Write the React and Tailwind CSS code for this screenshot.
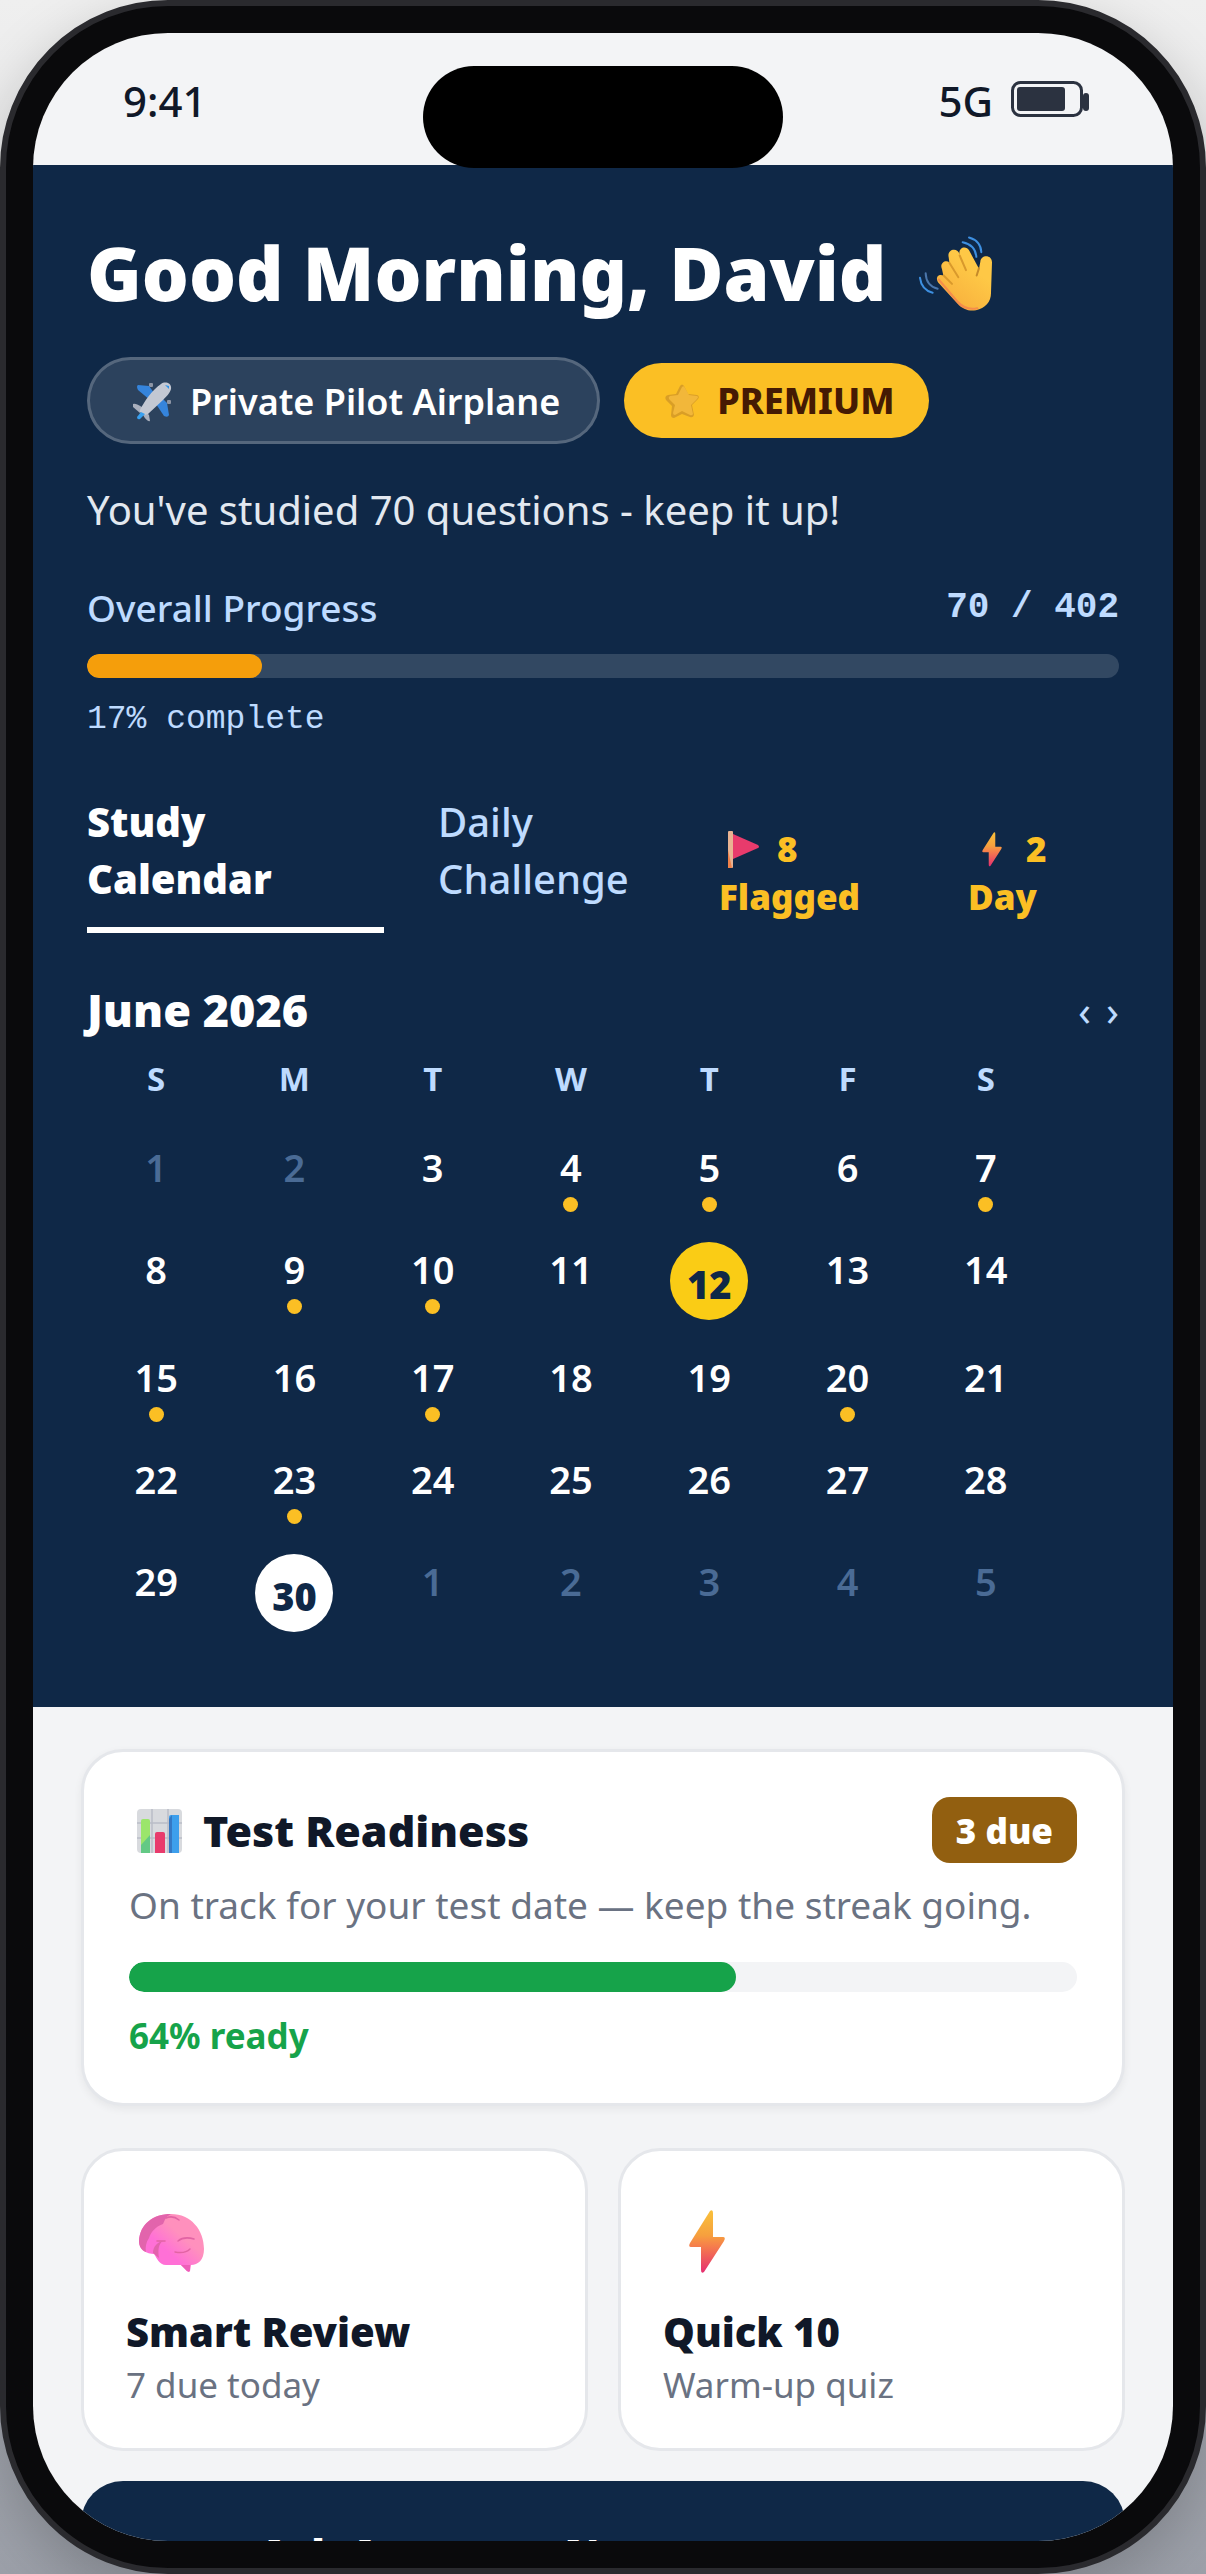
import { useState } from "react";
import clsx from "clsx";

const WEEKDAYS = ["S", "M", "T", "W", "T", "F", "S"];

const WEEKS = [
  [
    { day: 1, muted: true },
    { day: 2, muted: true },
    { day: 3 },
    { day: 4, studied: true },
    { day: 5, studied: true },
    { day: 6 },
    { day: 7, studied: true },
  ],
  [
    { day: 8 },
    { day: 9, studied: true },
    { day: 10, studied: true },
    { day: 11 },
    { day: 12, mark: "test" },
    { day: 13 },
    { day: 14 },
  ],
  [
    { day: 15, studied: true },
    { day: 16 },
    { day: 17, studied: true },
    { day: 18 },
    { day: 19 },
    { day: 20, studied: true },
    { day: 21 },
  ],
  [
    { day: 22 },
    { day: 23, studied: true },
    { day: 24 },
    { day: 25 },
    { day: 26 },
    { day: 27 },
    { day: 28 },
  ],
  [
    { day: 29 },
    { day: 30, mark: "today" },
    { day: 1, muted: true },
    { day: 2, muted: true },
    { day: 3, muted: true },
    { day: 4, muted: true },
    { day: 5, muted: true },
  ],
];

const WaveIcon = ({ className }) => (
  <svg viewBox="50 45 225 230" className={className} aria-hidden="true">
    <defs>
      <linearGradient id="wave-palm" x1="0.2" y1="0.9" x2="0.6" y2="0.3">
        <stop offset="0" stopColor="#f5824a" />
        <stop offset="0.22" stopColor="#f9b53f" />
        <stop offset="1" stopColor="#fec846" />
      </linearGradient>
    </defs>
    <g fill="none" stroke="#3d8fe0" strokeWidth="6" strokeLinecap="round">
      <path d="M184 66Q222 74 225 110" />
      <path d="M203 52Q238 62 240 96" />
      <path d="M73 159Q74 196 109 206" stroke="#4a76ab" />
      <path d="M56 173Q60 208 94 218" />
    </g>
    <path
      d="M109 168C104 176 108 184 114 191L168 250C184 268 204 274 224 270C252 264 270 244 269 216L272 127C272 102 238 103 237 125L233 146L204 92C194 73 169 83 175 104C170 80 136 87 142 111L144 126C130 118 114 131 122 147L126 166C120 163 113 164 109 168Z"
      fill="url(#wave-palm)"
    />
    <g fill="none" stroke="#d9992c" strokeWidth="6" strokeLinecap="round">
      <path d="M144 128L171 171" />
      <path d="M175 106L194 150" />
      <path d="M127 166L152 191" />
      <path d="M233 144L226 166" stroke="#c58a2a" />
    </g>
    <path
      d="M112 178L168 244C184 262 204 269 228 264"
      fill="none"
      stroke="#f4834c"
      strokeWidth="6"
      strokeLinecap="round"
      opacity="0.8"
    />
  </svg>
);

const PlaneIcon = ({ className }) => (
  <svg viewBox="0 0 40 40" className={className} aria-hidden="true">
    <g fill="#8d95a5">
      <rect x="17" y="1" width="4" height="4" rx="1" />
      <rect x="35" y="18" width="4" height="4" rx="1" />
    </g>
    <path d="M6 3L17 4L25 15L18 18L6 8Q4 4 6 3Z" fill="#3584dc" />
    <path d="M35 21L37 33Q36 36 32 34L24 22L28 14Z" fill="#3584dc" />
    <path d="M1 22Q4 21 11 26L8 31L1 25Z" fill="#a9afbd" />
    <path d="M12 28L17 33L18 39Q15 40 11 33Z" fill="#a9afbd" />
    <path
      d="M29 2C33 -1 40 1 39 7C38 11 34 15 31 18L16 32C12 34 7 31 8 28C12 20 20 8 29 2Z"
      fill="#c3c8d3"
    />
    <path d="M9 30L13 32L8 37Q5 38 5 35Z" fill="#38a0f0" />
    <path d="M33 3L37 4L37 7Z" fill="#2f92e8" />
  </svg>
);

const StarIcon = ({ className }) => (
  <svg viewBox="0 0 34 34" className={className} aria-hidden="true">
    <path
      d="M15 2Q17 -1 19 2L23 10L32 11Q35 12 33 15L27 21L29 31Q28 34 25 33L17 30L9 34Q6 34 6 31L7 22L1 16Q-1 12 3 11L11 10Z"
      fill="#d99e26"
    />
    <path
      d="M17 3Q19 1 20 4L24 11L32 12Q34 13 32 15L26 21L28 30Q27 32 25 31L17 27L10 31Q8 31 8 29L10 21L4 15Q3 13 5 12L13 11Z"
      fill="#f2b73a"
    />
  </svg>
);

const FlagIcon = ({ className }) => (
  <svg viewBox="0 0 48 48" className={className} aria-hidden="true">
    <path d="M14 9L39 20Q41 22 39 23L14 34Z" fill="#e83b6c" />
    <rect x="9" y="6" width="5" height="37" rx="1" fill="#e9b392" />
    <path d="M9 25L13 43H9Z" fill="#f0824a" />
  </svg>
);

const BoltIcon = ({ className }) => (
  <svg viewBox="-26 -13 88 88" className={className} aria-hidden="true">
    <defs>
      <linearGradient id="bolt" x1="0" y1="0" x2="0" y2="1">
        <stop offset="0.05" stopColor="#f9bd3a" />
        <stop offset="0.4" stopColor="#f6a03e" />
        <stop offset="0.55" stopColor="#f6824a" />
        <stop offset="1" stopColor="#e52e70" />
      </linearGradient>
    </defs>
    <path
      d="M21 1Q24 -1 24 3V27H34Q37 27 35 31L15 62Q12 64 12 60V37H2Q-1 37 1 33Z"
      fill="url(#bolt)"
    />
  </svg>
);

const ChartIcon = ({ className }) => (
  <svg viewBox="0 0 60 60" className={className} aria-hidden="true">
    <rect x="8" y="8" width="45" height="44" rx="4" fill="#d8dade" />
    <g stroke="#b9bdc7" strokeWidth="1.5">
      <path d="M8 22H53M8 37H53M23 8V52M39 8V52" />
    </g>
    <path d="M12 20Q12 18 14 18H19Q21 18 21 20V52H12Z" fill="#9be56b" />
    <path d="M12 44L21 34V52H12Z" fill="#63c985" />
    <path d="M26 33Q26 31 28 31H34Q36 31 36 33V52H26Z" fill="#e83b6c" />
    <path d="M40 16Q40 14 42 14H50V52H40Z" fill="#3d9fec" />
    <path d="M40 18L43 14V52H40Z" fill="#3578c4" />
  </svg>
);

const BrainIcon = ({ className }) => (
  <svg viewBox="-13 -17 88 88" className={className} aria-hidden="true">
    <defs>
      <linearGradient id="brain" x1="0.25" y1="0.85" x2="0.8" y2="0.3">
        <stop offset="0.35" stopColor="#ff70d6" />
        <stop offset="0.8" stopColor="#ff90bd" />
      </linearGradient>
    </defs>
    <path
      d="M0 27C1 10 14 0 32 0C52 0 65 16 65 35C65 46 59 51 52 51L51 57Q49 59 46 55L42 51H27C20 51 18 44 15 40C8 40 0 36 0 27Z"
      fill="url(#brain)"
    />
    <path
      d="M0 27C1 10 14 0 32 0C26 3 26 6 24 10C16 13 12 18 10 24C7 28 6 34 7 38C2 36 0 32 0 27Z"
      fill="#e264ac"
    />
    <path d="M24 27C19 30 19 37 20 44C17 42 16 40 14 39C14 33 18 28 24 27Z" fill="#e264ac" />
    <g fill="none" stroke="#e264a4" strokeWidth="1.5" strokeLinecap="round">
      <path d="M27 4Q34 1 40 6" />
      <path d="M39 27Q45 22 55 25" />
      <path d="M36 38Q46 40 51 35" />
      <path d="M18 27H26" />
    </g>
    <path d="M42 51H51V57Q49 59 46 55Z" fill="#ee5fb8" />
  </svg>
);

const BatteryIcon = ({ className }) => (
  <svg viewBox="0 0 78 36" className={className} aria-hidden="true">
    <rect x="1.5" y="1.5" width="69" height="33" rx="8" fill="none" stroke="#2b3240" strokeWidth="3" />
    <rect x="6" y="6" width="48" height="24" rx="3" fill="#2b3240" />
    <rect x="72" y="12" width="6" height="18" rx="3" fill="#2b3240" />
  </svg>
);

function StatusBar() {
  return (
    <div className="relative flex h-[132px] shrink-0 items-center justify-between pl-[90px] pr-[84px] pt-[2px] text-[42px] font-medium text-gray-900">
      <span>9:41</span>
      <div className="absolute left-1/2 top-[33px] z-10 h-[102px] w-[360px] -translate-x-1/2 rounded-full bg-black" />
      <div className="flex items-center gap-[18px]">
        <span>5G</span>
        <BatteryIcon className="mb-[2px] h-9 w-[78px]" />
      </div>
    </div>
  );
}

function ProgressBar({ label, value, track, fill, height }) {
  return (
    <div
      role="progressbar"
      aria-label={label}
      aria-valuenow={value}
      aria-valuemin={0}
      aria-valuemax={100}
      className={clsx("overflow-hidden rounded-full", track, height)}
    >
      <div className={clsx("h-full rounded-full", fill)} style={{ width: `${value}%` }} />
    </div>
  );
}

function CalendarDay({ day, muted, studied, mark }) {
  if (mark) {
    return (
      <div
        className={clsx(
          "mx-auto flex size-[78px] items-center justify-center rounded-full pt-[6px] font-black text-[#0f2847]",
          mark === "today" ? "bg-white" : "bg-[#facc15]"
        )}
      >
        {day}
      </div>
    );
  }

  return (
    <div
      className={clsx(
        "flex h-[72px] flex-col items-center justify-between",
        muted ? "text-[#4a6b95]" : "text-white"
      )}
    >
      <span>{day}</span>
      {studied && <span className="size-[15px] rounded-full bg-[#fbbf24]" />}
    </div>
  );
}

function Calendar() {
  return (
    <section className="mt-[49px]">
      <div className="flex items-center justify-between">
        <h2 className="text-[45px] font-black leading-[56px] text-white">June 2026</h2>
        <div className="flex gap-[15px] text-[42px] leading-[52px] text-blue-200">
          <button aria-label="Previous month">‹</button>
          <button aria-label="Next month">›</button>
        </div>
      </div>
      <div className="pr-16">
        <table className="mt-[19px] w-full table-fixed text-center">
          <thead>
            <tr className="text-[33px] leading-[44px] text-blue-200">
              {WEEKDAYS.map((name, i) => (
                <th key={i} className="p-0 pb-[39px] font-bold">
                  {name}
                </th>
              ))}
            </tr>
          </thead>
          <tbody className="text-[38px] font-semibold leading-[54px]">
            {WEEKS.map((week, i) => (
              <tr key={i}>
                {week.map((item, j) => (
                  <td key={j} className="p-0 pb-[30px] align-top">
                    <CalendarDay {...item} />
                  </td>
                ))}
              </tr>
            ))}
          </tbody>
        </table>
      </div>
    </section>
  );
}

function Tabs() {
  const [tab, setTab] = useState("calendar");

  const tabClass = (name) =>
    clsx(
      "mr-[54px] border-b-6 pb-5 text-left text-[40px] leading-[57px]",
      tab === name
        ? "border-white font-black text-white"
        : "border-transparent font-medium text-blue-200"
    );

  return (
    <div className="mt-[51px] grid grid-cols-[351fr_281fr_249fr_151fr] items-end">
      <button className={tabClass("calendar")} onClick={() => setTab("calendar")}>
        <span className="block">Study</span>
        <span className="block">Calendar</span>
      </button>
      <button className={tabClass("challenge")} onClick={() => setTab("challenge")}>
        <span className="block">Daily</span>
        <span className="block">Challenge</span>
      </button>
      <div className="pb-3 text-[35px] font-black leading-[48px] text-[#fbbf24]">
        <div className="flex gap-[10px]">
          <FlagIcon className="size-12" />8
        </div>
        Flagged
      </div>
      <div className="pb-3 text-[35px] font-black leading-[48px] text-[#fbbf24]">
        <div className="flex gap-[10px]">
          <BoltIcon className="size-12" />2
        </div>
        Day
      </div>
    </div>
  );
}

function Header() {
  return (
    <header className="bg-[#0f2847] px-[54px] pb-[45px] pt-[62px]">
      <div className="flex items-center gap-8">
        <h1 className="text-[74px] font-black leading-[92px] text-white">Good Morning, David</h1>
        <WaveIcon className="h-[77px] w-[75px]" />
      </div>

      <div className="mt-[38px] flex items-center gap-6">
        <span className="flex h-[87px] items-center gap-[18px] rounded-full border-3 border-white/20 bg-white/12 pl-[42px] pr-[37px] pt-[2px] text-[36px] font-semibold text-white">
          <PlaneIcon className="size-10" />
          Private Pilot Airplane
        </span>
        <span className="flex h-[75px] items-center gap-[18px] rounded-full bg-[#fbbf24] pl-[41px] pr-[34px] text-[36px] font-extrabold text-[#451a03]">
          <StarIcon className="size-[34px]" />
          PREMIUM
        </span>
      </div>

      <p className="mt-[38px] text-[40px] leading-[56px] text-slate-200">
        You've studied 70 questions - keep it up!
      </p>

      <div className="mb-5 mt-11 flex items-center justify-between text-blue-200">
        <span className="text-[37px] font-medium leading-[52px]">Overall Progress</span>
        <span className="font-['Liberation_Mono',monospace] text-[36px] font-bold leading-[44px]">
          70 / 402
        </span>
      </div>
      <ProgressBar
        label="Overall Progress"
        value={17}
        track="bg-white/15"
        fill="bg-[#f59e0b]"
        height="h-6"
      />
      <p className="mt-5 font-['Liberation_Mono',monospace] text-[33px] leading-[44px] text-blue-200">
        17% complete
      </p>

      <Tabs />
      <Calendar />
    </header>
  );
}

function ReadinessCard() {
  return (
    <section className="rounded-[42px] border-3 border-gray-200 bg-white px-[45px] pb-[43px] pt-[45px] shadow-[0_3px_9px_rgba(0,0,0,0.06)]">
      <div className="flex items-center justify-between">
        <h2 className="flex items-center gap-[14px] pt-[2px] text-[43px] font-black leading-[60px] text-gray-900">
          <ChartIcon className="size-[60px]" />
          Test Readiness
        </h2>
        <span className="flex h-[66px] items-center rounded-[18px] bg-[#925f10] px-6 pt-[2px] text-[35px] font-black text-white">
          3 due
        </span>
      </div>
      <p className="mt-4 text-[37px] leading-[52px] text-gray-500">
        On track for your test date — keep the streak going.
      </p>
      <div className="mt-[31px]">
        <ProgressBar
          label="Test Readiness"
          value={64}
          track="bg-gray-100"
          fill="bg-[#16a34a]"
          height="h-[30px]"
        />
      </div>
      <p className="mt-5 text-[35px] font-bold leading-[48px] text-[#16a34a]">64% ready</p>
    </section>
  );
}

function ActionCard({ icon: Icon, title, subtitle }) {
  return (
    <button className="rounded-[42px] border-3 border-gray-200 bg-white px-[42px] pb-10 pt-[46px] text-left">
      <Icon className="size-[88px]" />
      <span className="mt-[21px] block text-[40px] font-black leading-[52px] text-gray-900">
        {title}
      </span>
      <span className="mt-1 block text-[35px] leading-[46px] text-gray-500">{subtitle}</span>
    </button>
  );
}

export default function App() {
  return (
    <div className="h-screen overflow-hidden bg-gradient-to-b from-[#efefef] to-[#9ca0a9] font-['Noto_Sans',sans-serif]">
      <div className="h-full rounded-[168px] border-6 border-[#2a2a2e] bg-[#0a0a0c] p-[27px] shadow-[0_20px_60px_rgba(0,0,0,0.2)]">
        <div className="flex h-full flex-col overflow-hidden rounded-[135px] bg-gray-100">
          <StatusBar />
          <Header />
          <main className="px-12 pt-[42px]">
            <ReadinessCard />
            <div className="mt-[42px] grid grid-cols-2 gap-[30px]">
              <ActionCard icon={BrainIcon} title="Smart Review" subtitle="7 due today" />
              <ActionCard icon={BoltIcon} title="Quick 10" subtitle="Warm-up quiz" />
            </div>
            <button className="mt-[30px] block w-full rounded-[42px] bg-[#0f2847] px-[178px] py-[47px] text-left text-[42px] font-black leading-[52px] text-white">
              Ask Aeronaut Notes
            </button>
          </main>
        </div>
      </div>
    </div>
  );
}
